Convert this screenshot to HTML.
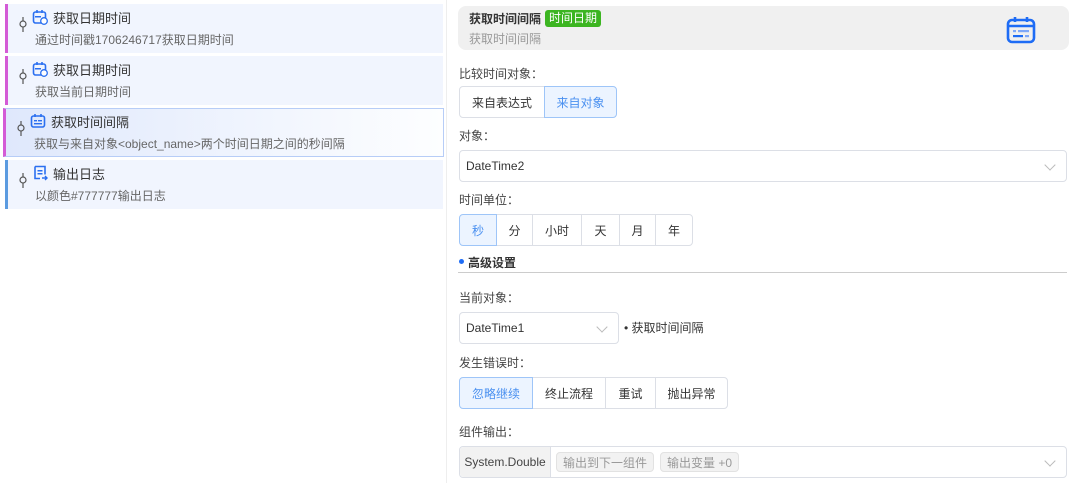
<!DOCTYPE html>
<html><head><meta charset="utf-8">
<style>
*{box-sizing:border-box;margin:0;padding:0}
body{width:1071px;height:483px;background:#fff;font-family:"Liberation Sans","Noto Sans CJK SC",sans-serif;position:relative;overflow:hidden;color:#333}
.a{position:absolute}
.item{position:absolute;left:5px;width:438px;height:49px;background:#f1f5fe;border-left:3px solid #d45bd6}
.item .t{position:absolute;left:45px;top:4px;font-size:13px;color:#333}
.item .s{position:absolute;left:27px;top:27px;font-size:12px;color:#666;white-space:nowrap}
.item .ic{position:absolute;left:24px;top:5px}
.item .pin{position:absolute;left:11px;top:12px}
.lbl{position:absolute;left:459px;font-size:12px;color:#444}
.grp{position:absolute;display:flex;height:32px}
.grp div{border:1px solid #dcdfe6;margin-left:-1px;font-size:12px;color:#333;display:flex;align-items:center;justify-content:center;background:#fff}
.grp div:first-child{border-radius:4px 0 0 4px;margin-left:0}
.grp div:last-child{border-radius:0 4px 4px 0}
.grp div.on{background:#ecf4ff;border-color:#9ec5f8;color:#4a90f0;position:relative;z-index:1}
.sel{position:absolute;height:32px;border:1px solid #dcdfe6;border-radius:4px;font-size:12px;color:#333;padding-left:6px;display:flex;align-items:center}
.chev{position:absolute;right:12px;top:10px;width:8px;height:8px;border-right:1px solid #bbb;border-bottom:1px solid #bbb;transform:rotate(45deg)}
</style></head><body>
<div class="a" style="left:446px;top:0;width:1px;height:483px;background:#eee"></div>

<svg width="0" height="0" style="position:absolute">
<defs>
<g id="pin"><circle cx="4" cy="8" r="3" fill="none" stroke="#555" stroke-width="1.2"/><line x1="4" y1="1" x2="4" y2="5" stroke="#555" stroke-width="1.2"/><line x1="4" y1="11" x2="4" y2="16" stroke="#555" stroke-width="1.2"/></g>
</defs></svg>

<div class="item" style="top:4px"><svg class="pin" width="8" height="17"><use href="#pin"/></svg>
<svg class="ic" width="16" height="16" viewBox="0 0 16 16"><rect x="1.5" y="3" width="12" height="11" rx="2" fill="none" stroke="#2a6ff0" stroke-width="1.6"/><line x1="5" y1="1" x2="5" y2="4" stroke="#2a6ff0" stroke-width="1.6"/><line x1="10" y1="1" x2="10" y2="4" stroke="#2a6ff0" stroke-width="1.6"/><rect x="3" y="7" width="6" height="1.5" fill="#2a6ff0"/><circle cx="12" cy="12" r="3.3" fill="#fff" stroke="#2a6ff0" stroke-width="1.3"/></svg>
<div class="t">获取日期时间</div><div class="s">通过时间戳1706246717获取日期时间</div></div>

<div class="item" style="top:56px"><svg class="pin" width="8" height="17"><use href="#pin"/></svg>
<svg class="ic" width="16" height="16" viewBox="0 0 16 16"><rect x="1.5" y="3" width="12" height="11" rx="2" fill="none" stroke="#2a6ff0" stroke-width="1.6"/><line x1="5" y1="1" x2="5" y2="4" stroke="#2a6ff0" stroke-width="1.6"/><line x1="10" y1="1" x2="10" y2="4" stroke="#2a6ff0" stroke-width="1.6"/><rect x="3" y="7" width="6" height="1.5" fill="#2a6ff0"/><circle cx="12" cy="12" r="3.3" fill="#fff" stroke="#2a6ff0" stroke-width="1.3"/></svg>
<div class="t">获取日期时间</div><div class="s">获取当前日期时间</div></div>

<div class="item" style="top:108px;left:3px;width:441px;border:1px solid #b7cdf7;border-left:3px solid #d45bd6;background:linear-gradient(90deg,#dfe8fc,#fdfeff)"><svg class="pin" width="8" height="17" style="top:11px"><use href="#pin"/></svg>
<svg class="ic" width="16" height="16" viewBox="0 0 16 16" style="top:4px"><rect x="1.5" y="3" width="13" height="11" rx="2" fill="none" stroke="#2a6ff0" stroke-width="1.6"/><line x1="5" y1="1" x2="5" y2="4" stroke="#2a6ff0" stroke-width="1.6"/><line x1="11" y1="1" x2="11" y2="4" stroke="#2a6ff0" stroke-width="1.6"/><rect x="4" y="7" width="3" height="1.4" fill="#2a6ff0"/><rect x="8" y="7" width="4" height="1.4" fill="#2a6ff0"/><rect x="4" y="10" width="8" height="1.4" fill="#2a6ff0"/></svg>
<div class="t" style="top:3px">获取时间间隔</div><div class="s" style="top:26px;left:28px">获取与来自对象&lt;object_name&gt;两个时间日期之间的秒间隔</div></div>

<div class="item" style="top:160px;border-left-color:#5b9be0"><svg class="pin" width="8" height="17"><use href="#pin"/></svg>
<svg class="ic" width="16" height="16" viewBox="0 0 16 16"><path d="M3 1.5h10v8" fill="none" stroke="#2a6ff0" stroke-width="1.6"/><path d="M3 1.5v12h5" fill="none" stroke="#2a6ff0" stroke-width="1.6"/><rect x="5.5" y="5" width="5" height="1.5" fill="#2a6ff0"/><rect x="5.5" y="8" width="5" height="1.5" fill="#2a6ff0"/><path d="M10 13h5M13 11l2 2-2 2" fill="none" stroke="#2a6ff0" stroke-width="1.4"/></svg>
<div class="t">输出日志</div><div class="s">以颜色#777777输出日志</div></div>

<!-- right -->
<div class="a" style="left:458px;top:6px;width:611px;height:44px;background:#f0f0f0;border-radius:8px"></div>
<div class="a" style="left:469px;top:10px;font-size:12px;font-weight:bold;color:#333">获取时间间隔</div>
<div class="a" style="left:545px;top:10px;width:56px;height:17px;background:#3cb521;border-radius:3px;color:#fff;font-size:12px;text-align:center;line-height:17px">时间日期</div>
<div class="a" style="left:469px;top:30px;font-size:12px;color:#999">获取时间间隔</div>
<svg class="a" style="left:1005px;top:16px" width="32" height="28" viewBox="0 0 32 28"><rect x="3" y="4" width="26" height="22" rx="4" fill="none" stroke="#1e6cf5" stroke-width="2.6"/><line x1="3" y1="10" x2="29" y2="10" stroke="#1e6cf5" stroke-width="2.6"/><line x1="10" y1="1" x2="10" y2="6" stroke="#1e6cf5" stroke-width="2.6"/><line x1="22" y1="1" x2="22" y2="6" stroke="#1e6cf5" stroke-width="2.6"/><rect x="8" y="14" width="3" height="2.2" fill="#7fa8f8"/><rect x="13" y="14" width="11" height="2.2" fill="#7fa8f8"/><rect x="8" y="19" width="10" height="2.2" fill="#1e6cf5"/><rect x="20" y="19" width="4" height="2.2" fill="#7fa8f8"/></svg>

<div class="lbl" style="top:65px">比较时间对象：</div>
<div class="grp" style="left:459px;top:86px"><div style="width:86px">来自表达式</div><div class="on" style="width:73px">来自对象</div></div>

<div class="lbl" style="top:127px">对象：</div>
<div class="sel" style="left:459px;top:150px;width:608px">DateTime2<span class="chev"></span></div>

<div class="lbl" style="top:191px">时间单位：</div>
<div class="grp" style="left:459px;top:214px"><div class="on" style="width:38px">秒</div><div style="width:37px">分</div><div style="width:50px">小时</div><div style="width:39px">天</div><div style="width:37px">月</div><div style="width:38px">年</div></div>

<div class="a" style="left:459px;top:259px;width:5px;height:5px;border-radius:50%;background:#1e6cf5"></div>
<div class="a" style="left:468px;top:254px;font-size:12px;font-weight:bold;color:#333">高级设置</div>
<div class="a" style="left:458px;top:272px;width:609px;height:1px;background:#ccc"></div>

<div class="lbl" style="top:289px">当前对象：</div>
<div class="sel" style="left:459px;top:312px;width:160px">DateTime1<span class="chev"></span></div>
<div class="a" style="left:624px;top:319px;font-size:12px;color:#333">• 获取时间间隔</div>

<div class="lbl" style="top:354px">发生错误时：</div>
<div class="grp" style="left:459px;top:377px"><div class="on" style="width:74px">忽略继续</div><div style="width:74px">终止流程</div><div style="width:51px">重试</div><div style="width:73px">抛出异常</div></div>

<div class="lbl" style="top:423px">组件输出：</div>
<div class="sel" style="left:459px;top:446px;width:608px;padding-left:0">
<div style="width:91px;height:30px;background:#f2f2f2;border-right:1px solid #dcdfe6;display:flex;align-items:center;justify-content:center;border-radius:4px 0 0 4px;color:#444">System.Double</div>
<div style="margin-left:5px;height:20px;padding:0 6px;background:#f2f2f2;border:1px solid #e2e2e2;border-radius:4px;color:#999;display:flex;align-items:center">输出到下一组件</div>
<div style="margin-left:6px;height:20px;padding:0 6px;background:#f2f2f2;border:1px solid #e2e2e2;border-radius:4px;color:#999;display:flex;align-items:center">输出变量 +0</div>
<span class="chev"></span></div>
</body></html>
